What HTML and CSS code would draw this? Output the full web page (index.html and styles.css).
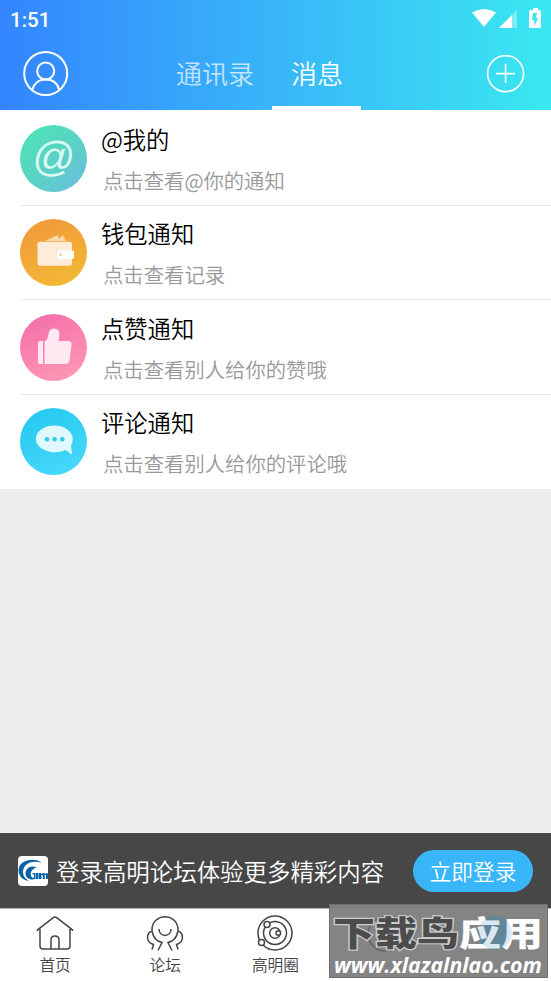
FILE: index.html
```html
<!DOCTYPE html>
<html lang="zh-CN">
<head>
<meta charset="utf-8">
<title>消息</title>
<link rel="stylesheet" href="styles.css">
</head>
<body>
<div class="app">
  <header class="header">
    <div class="status">
      <span class="clock">1:51</span>
      <svg class="status-icons" width="72" height="22" viewBox="0 0 72 22" fill="#fff">
        <path d="M0 4.500Q12-2.500 24 4.500L12 19Z"/>
        <path d="M45 2v18H27Z" opacity=".35"/><path d="M40 7v13H27Z"/>
        <path fill-rule="evenodd" d="M59.500 2H61V0h5v2h1.500Q69 2 69 3.500v15Q69 20 67.500 20h-9Q57 20 57 18.500v-15Q57 2 58.500 2ZM61 5l-1 7h2.200v6l4-8H64l1-5Z"/>
      </svg>
    </div>
    <div class="topbar">
      <svg class="avatar" width="46" height="46" viewBox="0 0 46 46" fill="none" stroke="#fff" stroke-width="2"><circle cx="22.700" cy="22.500" r="21.500"/><circle cx="22.700" cy="20" r="8.500"/><path d="M9.200 39C11 32 16 28.500 22.700 28.500S34.500 32 36.200 39"/></svg>
      <nav class="tabs"><span class="tab">通讯录</span><span class="tab active">消息</span></nav>
      <svg class="add" width="38" height="38" viewBox="0 0 38 38" fill="none" stroke="#fff" stroke-width="1.600"><circle cx="18.600" cy="18.600" r="18"/><path d="M9.100 18.600h19M18.600 9.100v19"/></svg>
    </div>
  </header>
  <main class="list">
    <section class="row">
      <div class="icon mention"><span class="at">@</span></div>
      <div class="text"><h2>@我的</h2><p>点击查看@你的通知</p></div>
    </section>
    <section class="row">
      <div class="icon wallet"><svg viewBox="0 0 67 67"><path d="M25 22l13-6 1 6zM36 22l7-6 3 6z" fill="#fbd6ab"/><rect x="17.500" y="22.800" width="34.500" height="24" rx="2.500" fill="#fdecd9"/><path d="M40 31.500h12q2 0 2 2V38q0 2-2 2H40q-3 0-3-4.200t3-4.300Z" fill="#fff"/><circle cx="40.700" cy="35.800" r="1.500" fill="#f8cf94"/></svg></div>
      <div class="text"><h2>钱包通知</h2><p>点击查看记录</p></div>
    </section>
    <section class="row">
      <div class="icon like"><svg viewBox="0 0 67 67" fill="#ffe8f2"><path d="M23 27v23h-3q-2 0-2-2V29q0-2 2-2ZM24.500 27q3-.5 3.500-5l1-4q1-3.500 5-3.500 6 0 5.500 7l-1 5.500h10q3.500 0 3 4l-2 15q-.5 4-4 4h-21Z"/></svg></div>
      <div class="text"><h2>点赞通知</h2><p>点击查看别人给你的赞哦</p></div>
    </section>
    <section class="row">
      <div class="icon comment"><svg viewBox="0 0 67 67"><path d="M34.300 17.500c10.300 0 18.500 6 18.500 13.500q0 4-1.800 6.500l1 9-6.500-4.500c-15 6-29.700-1.500-29.700-11 0-7.500 8.200-13.500 18.500-13.500Z" fill="#dff9ff"/><g fill="#2dc9ee"><circle cx="27" cy="31.300" r="2.200"/><circle cx="34.700" cy="31.300" r="2.200"/><circle cx="42.300" cy="31.300" r="2.200"/></g></svg></div>
      <div class="text"><h2>评论通知</h2><p>点击查看别人给你的评论哦</p></div>
    </section>
  </main>
  <div class="login">
    <svg class="logo" width="30" height="30" viewBox="0 0 30 30"><rect width="30" height="30" rx="4" fill="#fff"/><g fill="#0d62a5"><path d="M24 7C18 1 1 3 .5 14c0 6 4 10 10.500 11-5-3-7-7-5.500-12C7.500 7 15 4 24 7Z"/><path d="M18.500 11.500c-6-3-11 1-11 6 0 5 5 7 10 5.500V17h-3v1.500h1.500V22c-5 0-4.500-9 2.500-10.500Z"/><path d="M18 17h2.500v6H18ZM21 17h2v1q3-2 4 0 2-2 3 0v5h-2v-4h-1.200v4h-2v-4h-1.300v4H21Z"/></g></svg>
    <span class="slogan">登录高明论坛体验更多精彩内容</span>
    <button class="login-btn">立即登录</button>
  </div>
  <footer class="bottom">
    <a class="item"><svg width="38" height="36" viewBox="0 0 38 36"><path d="M1.500 16V14.800L17 2.800q2-1.600 4 0L36.500 14.800V16M4 14v17q0 3 3 3h24q3 0 3-3V14M15 34V25q0-4 4-4t4 4v9"/></svg><span>首页</span></a>
    <a class="item"><svg width="38" height="36" viewBox="0 0 38 36"><path d="M9.500 23.500a13 13 0 1 1 19 0M13 14c0 8.500 12 8.500 12 0M6.500 15.500C0 18-.5 27 7.500 29.500L6 34.500M31.500 15.500C38 18 38.500 27 30.500 29.500L32 34.500M6.500 17c.5 6 3.500 9 9.500 10.500l-4 8M31.500 17c-.5 6-3.500 9-9.500 10.500l4 8"/></svg><span>论坛</span></a>
    <a class="item"><svg width="38" height="36" viewBox="0 0 38 36"><circle cx="19" cy="18" r="17"/><circle cx="19" cy="18" r="11.500"/><circle cx="19" cy="18" r="5.300"/><g fill="#fff"><circle cx="11" cy="9.500" r="3"/><circle cx="5.500" cy="27.500" r="3"/><circle cx="22.300" cy="18" r="2.300"/></g></svg><span>高明圈</span></a>
    <a class="item"></a><a class="item"></a>
  </footer>
  <div class="mark">
    <svg class="mark-ghost" width="217" height="72" viewBox="0 0 217 72"><circle cx="55" cy="29" r="17" fill="none" stroke="#656565" stroke-width="1.500"/><circle cx="165" cy="28" r="17" fill="#66808f"/></svg>
    <div class="mark-name"><span class="dark">下载鸟</span><span>应用</span></div>
    <div class="mark-url">www.xlazalnlao.com</div>
    <svg class="mark-ghost" width="217" height="72" viewBox="0 0 217 72"><circle cx="165" cy="28" r="17" fill="#559dc0" opacity=".22"/></svg>
  </div>
</div>
</body>
</html>
```
FILE: styles.css
```css
* { box-sizing: border-box; margin: 0; padding: 0; }
body { width: 551px; height: 981px; overflow: hidden; font-family: Roboto, "Noto Sans CJK SC", sans-serif; }
.app { position: relative; height: 981px; display: flex; flex-direction: column; background: #ededed; }
.header { height: 110px; flex: none; background: linear-gradient(90deg, #3385ff, #38b6f8 50%, #3ae8f0); color: #fff; }
.status { height: 37px; display: flex; justify-content: space-between; padding: 8px 7px 0 10px; }
.clock { font: 500 20.5px/24px Roboto, sans-serif; }
.topbar { height: 73px; display: flex; align-items: flex-start; padding: 14px 26px 0 23px; }
.add { margin: 4px 0 0 auto; }
.tabs { display: flex; height: 59px; margin-left: 89px; }
.tab { width: 114px; padding-left: 18px; font: 350 26px/44px "Noto Sans CJK SC", sans-serif; color: rgba(255,255,255,.7); }
.tab.active { width: 89px; padding-left: 19px; color: #fff; border-bottom: 4px solid #fff; }
.list { flex: none; height: 379px; padding: 1px 0 0 20px; background: #fff; }
.row { height: 94.6px; display: flex; border-bottom: 1px solid #ebebeb; padding-top: 13.7px; }
.row:last-child { border: 0; padding-top: 13.2px; }
.icon { width: 67px; height: 67px; border-radius: 50%; flex: none; display: flex; }
.icon svg { width: 67px; height: 67px; }
.mention { background: linear-gradient(135deg, #4be6b2, #5dcfc8 60%, #6bb9e4); }
.at { margin: auto; color: #d9faf2; font: italic 42px/58px "Liberation Sans", sans-serif; transform: translateY(-1px) skewX(-4deg); }
.wallet { background: linear-gradient(160deg, #f1963b, #f2bc35); }
.like { background: linear-gradient(155deg, #f36ba9, #ff9cb5); }
.comment { background: linear-gradient(155deg, #22c7f0, #4bdafb); }
.text { padding-left: 14px; margin-top: -1px; font-family: "Noto Sans CJK SC", sans-serif; }
h2 { font-size: 23.3px; font-weight: 350; line-height: 30px; color: #000; }
p { margin: 13px 0 0 2px; font-size: 20.35px; font-weight: 350; line-height: 26px; color: #999; }
.login { height: 75px; margin-top: auto; flex: none; display: flex; align-items: center; background: #474747; padding: 0 18px; color: #fff; font-family: "Noto Sans CJK SC", sans-serif; }
.slogan { margin-left: 8px; font-size: 23.45px; font-weight: 350; white-space: nowrap; }
.login-btn { margin-left: auto; width: 120px; height: 42px; border: 0; border-radius: 21px; background: #38b6f8; color: #fff; font: 350 21.8px/40px "Noto Sans CJK SC", sans-serif; }
.bottom { height: 73px; flex: none; background: #fff; display: flex; border-top: 1px solid #b5b5b5; }
.item { width: 20%; display: flex; flex-direction: column; align-items: center; padding-top: 6px; font: 350 15.7px/22px "Noto Sans CJK SC", sans-serif; color: #444; }
.item svg { fill: none; stroke: #444; stroke-width: 1.5; }
.item span { margin-top: 3px; }
.mark { position: absolute; left: 329px; top: 904px; width: 219px; height: 74px; background: rgba(130,130,130,.98); border: 1px solid #707070; color: #fff; white-space: nowrap; }
.mark-ghost { position: absolute; left: 0; top: 0; }
.mark-name { position: relative; padding-left: 3px; height: 47px; font: 900 42px/56px "Noto Sans CJK SC", sans-serif; transform: translateY(-1px) scaleY(.8); }
.dark { color: #4c4c4c; -webkit-text-stroke: 3px #ccc; paint-order: stroke fill; }
.mark-url { position: relative; padding-left: 4px; font: italic 700 21.3px/26px "Open Sans", sans-serif; }
```
